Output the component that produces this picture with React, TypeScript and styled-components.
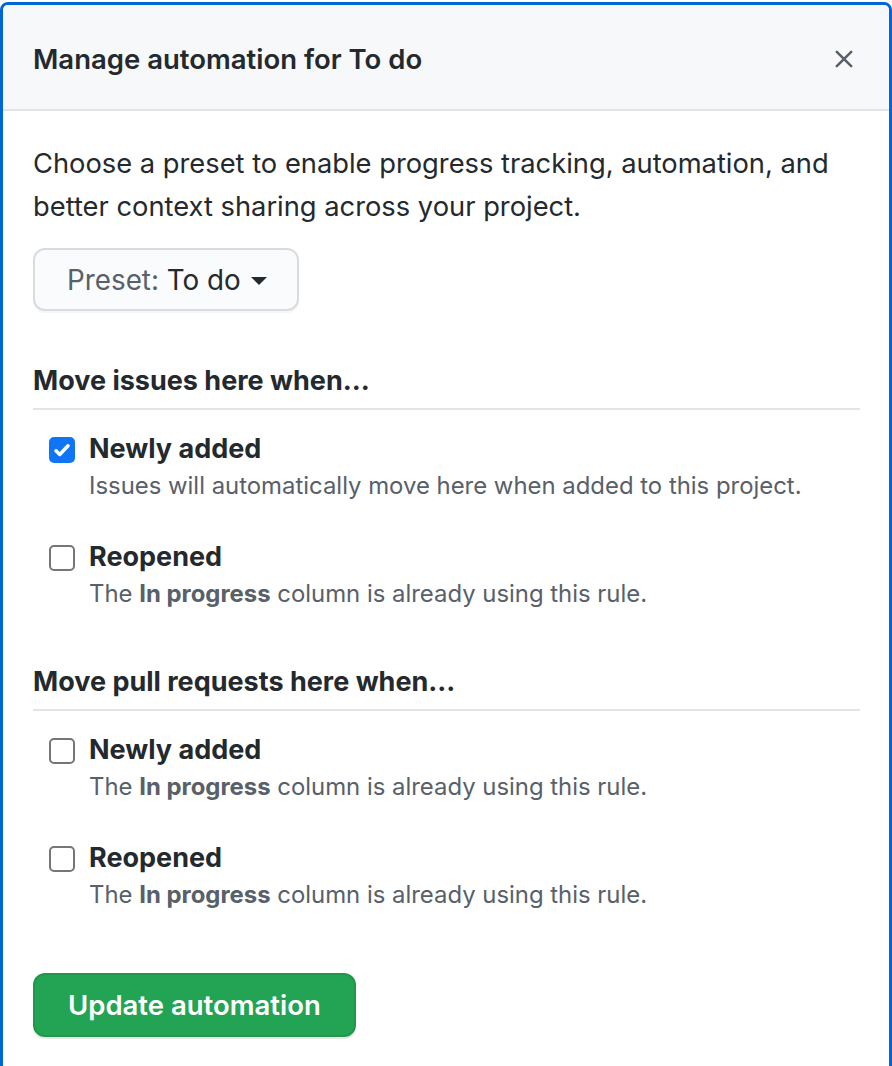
import React from "react";
import styled, { createGlobalStyle } from "styled-components";

const GlobalStyle = createGlobalStyle`
  html, body {
    margin: 0;
    padding: 0;
    background: #ffffff;
  }
  body {
    font-family: Inter, "Liberation Sans", Arial, sans-serif;
    color: #24292e;
    overflow: hidden;
  }
`;

const Dialog = styled.div`
  margin-top: 2px;
  border: 3px solid #0366d6;
  border-radius: 8px;
  background: #ffffff;
  min-height: 1200px;
  overflow: hidden;
`;

const Header = styled.div`
  display: flex;
  align-items: center;
  justify-content: space-between;
  padding: 33px 30px 29px 30px;
  background: #f6f8fa;
  border-bottom: 2px solid #e1e4e8;
`;

const Title = styled.h2`
  margin: 0;
  font-size: 27.5px;
  line-height: 42px;
  font-weight: 600;
  color: #24292e;
`;

const CloseButton = styled.button`
  display: flex;
  align-items: center;
  justify-content: center;
  padding: 0;
  margin-right: 6px;
  border: 0;
  background: transparent;
  color: #586069;
  cursor: pointer;
`;

const Body = styled.div`
  padding: 31px 29px 40px 30px;
`;

const Intro = styled.p`
  margin: 0 0 20px;
  font-size: 27.3px;
  line-height: 43px;
`;

const PresetButton = styled.button`
  display: inline-flex;
  align-items: center;
  gap: 10px;
  height: 63px;
  padding: 0 30px 0 32px;
  border: 2px solid #d8dce0;
  border-radius: 12px;
  background: #fafbfc;
  box-shadow: 0 2px 0 rgba(27, 31, 35, 0.04);
  font-family: inherit;
  font-size: 27.8px;
  color: #24292e;
  cursor: pointer;
`;

const Muted = styled.span`
  color: #586069;
`;

const Caret = styled.span`
  display: inline-block;
  width: 0;
  height: 0;
  margin-top: 2px;
  border-left: 8px solid transparent;
  border-right: 8px solid transparent;
  border-top: 8px solid #24292e;
`;

const Section = styled.section`
  margin-top: 49px;
`;

const SectionTitle = styled.h3`
  margin: 0;
  padding-bottom: 6px;
  border-bottom: 2px solid #e1e4e8;
  font-size: 27px;
  line-height: 42px;
  font-weight: 700;
`;

const RuleList = styled.div`
  display: flex;
  flex-direction: column;
  gap: 32px;
  padding: 18px 0 0 16px;
`;

const Rule = styled.label`
  display: grid;
  grid-template-columns: 26px 1fr;
  column-gap: 14px;
  cursor: pointer;
`;

const Box = styled.span<{ $checked?: boolean }>`
  display: flex;
  align-items: center;
  justify-content: center;
  width: 26px;
  height: 26px;
  margin-top: 9px;
  box-sizing: border-box;
  border-radius: 5px;
  border: ${(p) => (p.$checked ? "none" : "2px solid #767676")};
  background: ${(p) => (p.$checked ? "#0f75f5" : "#ffffff")};
`;

const RuleName = styled.div`
  font-size: 27px;
  line-height: 42px;
  font-weight: 700;
`;

const RuleNote = styled.div`
  margin-top: -2px;
  font-size: 23.9px;
  line-height: 36px;
  color: #586069;

  strong {
    font-weight: 700;
  }
`;

const Footer = styled.div`
  margin-top: 60px;
`;

const PrimaryButton = styled.button`
  height: 64px;
  padding: 0 33px;
  border: 2px solid #229748;
  border-radius: 12px;
  background: #22a454;
  box-shadow: 0 2px 0 rgba(27, 31, 35, 0.1);
  font-family: inherit;
  font-size: 27.5px;
  font-weight: 600;
  color: #ffffff;
  cursor: pointer;
`;

type RuleItem = {
  name: string;
  checked?: boolean;
  note: React.ReactNode;
};

const inProgress = (
  <>
    The <strong>In progress</strong> column is already using this rule.
  </>
);

const sections: { title: string; rules: RuleItem[] }[] = [
  {
    title: "Move issues here when...",
    rules: [
      {
        name: "Newly added",
        checked: true,
        note: "Issues will automatically move here when added to this project.",
      },
      { name: "Reopened", note: inProgress },
    ],
  },
  {
    title: "Move pull requests here when...",
    rules: [
      { name: "Newly added", note: inProgress },
      { name: "Reopened", note: inProgress },
    ],
  },
];

const Check = () => (
  <svg width="20" height="20" viewBox="0 0 16 16" fill="none">
    <path
      d="M3.2 8.6l3 3L12.8 4.6"
      stroke="#ffffff"
      strokeWidth="2.8"
      strokeLinecap="round"
      strokeLinejoin="round"
    />
  </svg>
);

const App = () => {
  return (
    <>
      <GlobalStyle />
      <Dialog>
        <Header>
          <Title>Manage automation for To do</Title>
          <CloseButton aria-label="Close">
            <svg width="18" height="18" viewBox="0 0 20 20">
              <path
                d="M2 2l16 16M18 2L2 18"
                stroke="currentColor"
                strokeWidth="2.8"
                strokeLinecap="round"
              />
            </svg>
          </CloseButton>
        </Header>
        <Body>
          <Intro>
            Choose a preset to enable progress tracking, automation, and better
            context sharing across your project.
          </Intro>
          <PresetButton>
            <span>
              <Muted>Preset:</Muted> To do
            </span>
            <Caret />
          </PresetButton>

          {sections.map((section) => (
            <Section key={section.title}>
              <SectionTitle>{section.title}</SectionTitle>
              <RuleList>
                {section.rules.map((rule) => (
                  <Rule key={rule.name}>
                    <Box $checked={rule.checked}>{rule.checked && <Check />}</Box>
                    <div>
                      <RuleName>{rule.name}</RuleName>
                      <RuleNote>{rule.note}</RuleNote>
                    </div>
                  </Rule>
                ))}
              </RuleList>
            </Section>
          ))}

          <Footer>
            <PrimaryButton>Update automation</PrimaryButton>
          </Footer>
        </Body>
      </Dialog>
    </>
  );
};

export default App;
